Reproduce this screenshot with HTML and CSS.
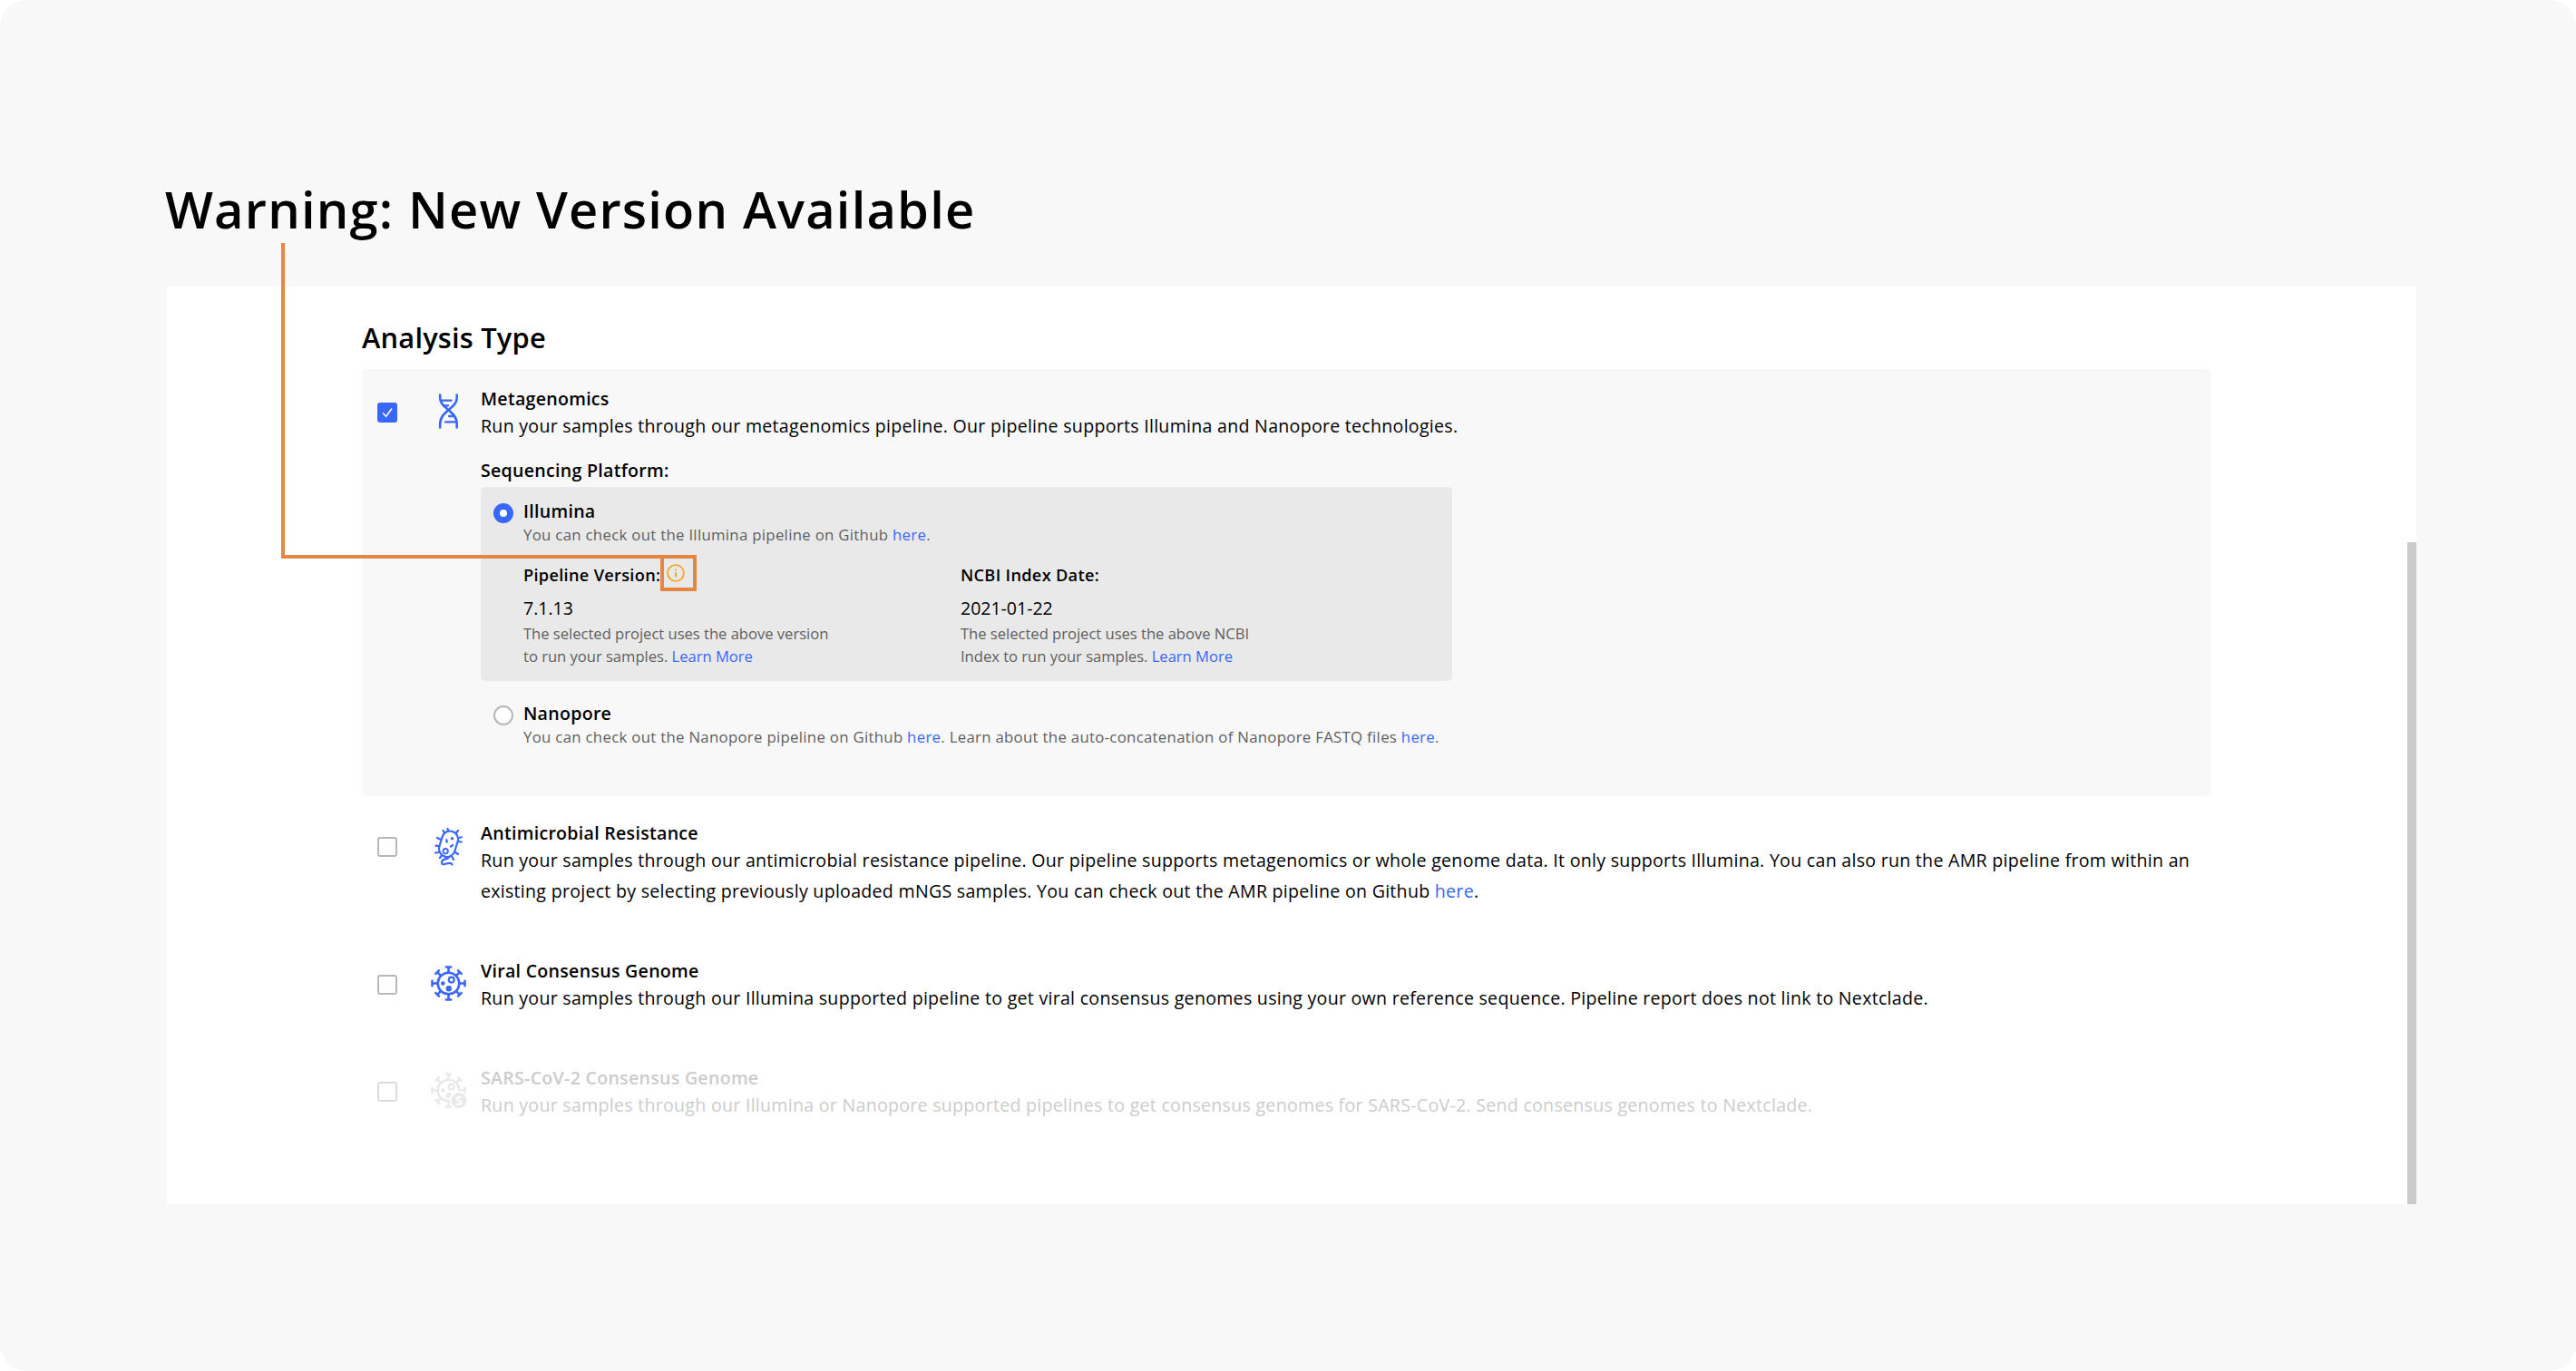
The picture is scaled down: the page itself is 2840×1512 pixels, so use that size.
FILE: index.html
```html
<!DOCTYPE html>
<html lang="en">
<head>
<meta charset="utf-8">
<title>Analysis Type</title>
<link rel="stylesheet" href="styles.css">
</head>
<body>
<main class="stage">
  <h1 class="headline">Warning: New Version Available</h1>
  <section class="panel">
    <h2 class="section-title">Analysis Type</h2>

    <article class="option option-selected">
      <span class="checkbox checked"><svg viewBox="0 0 22 22"><path d="M6 11.2 9.6 15.200 16 6.600" fill="none" stroke="#fff" stroke-width="1.6"/></svg></span>
      <svg class="icon" viewBox="0 0 39 39" fill="none" stroke="#3867fa" stroke-width="2.6" stroke-linecap="round">
        <path d="M10.200 1.500V5C10.200 16.500 28.700 19 28.700 33.500V37.500M28.700 1.500V5C28.700 16.500 10.200 19 10.200 33.500V37.500"/>
        <path d="M12 7.700H22.500M14 13.300H19M20 25H25M16 31.300H27" stroke-width="2.300"/>
      </svg>
      <div class="body">
        <h3 class="name">Metagenomics</h3>
        <p class="desc">Run your samples through our metagenomics pipeline. Our pipeline supports Illumina and Nanopore technologies.</p>
        <h4 class="platform-label">Sequencing Platform:</h4>
        <div class="platform platform-selected">
          <span class="radio on"></span>
          <div class="platform-body">
            <h4 class="platform-name">Illumina</h4>
            <p class="note">You can check out the Illumina pipeline on Github <a>here</a>.</p>
            <div class="versions">
              <div class="version">
                <h5 class="version-label">Pipeline Version:
                  <span class="callout"><svg viewBox="0 0 20 20" fill="none" stroke="#f5a623" stroke-width="1.800"><circle cx="10" cy="10" r="8.900"/><path d="M10 9V14.500M10 5.500V7.400"/></svg></span>
                </h5>
                <p class="version-value">7.1.13</p>
                <p class="note tight">The selected project uses the above version<br>to run your samples. <a>Learn More</a></p>
              </div>
              <div class="version">
                <h5 class="version-label">NCBI Index Date:</h5>
                <p class="version-value">2021-01-22</p>
                <p class="note tight">The selected project uses the above NCBI<br>Index to run your samples. <a>Learn More</a></p>
              </div>
            </div>
          </div>
        </div>
        <div class="platform">
          <span class="radio"></span>
          <div class="platform-body">
            <h4 class="platform-name">Nanopore</h4>
            <p class="note">You can check out the Nanopore pipeline on Github <a>here</a>. Learn about the auto-concatenation of Nanopore FASTQ files <a>here</a>.</p>
          </div>
        </div>
      </div>
    </article>

    <article class="option">
      <span class="checkbox"></span>
      <svg class="icon" viewBox="0 0 39 39" fill="none" stroke="#3867fa" stroke-width="2.200" stroke-linecap="round">
        <rect x="10.600" y="3.300" width="17.800" height="29" rx="8.900" transform="rotate(17 19.500 17.800)"/>
        <path d="M18.500 0.800 19.200 3.500M13.500 3 15 5.500M30 2.800 28 5.500M33.800 10.300 31 11M33.600 15.500 31 15.200M7 11 10 12.500M5.500 19.700 8.500 20.200M5 27.500 8.500 27M30 29 27 27M25 35 23.300 32M10 33 11.500 31"/>
        <path d="M19.500 33C16 35.500 12.800 34 12 37.500C12 43 17.500 38.700 20.500 38.800C22.300 38.800 23 39.300 23.500 40.500"/>
        <circle cx="16.200" cy="25.700" r="2.700" stroke-width="1.800"/>
        <circle cx="23.500" cy="11.800" r="1.700" fill="#3867fa" stroke="none"/>
        <path d="M17.200 13.300 17.700 15.500M22 20.500 24 19.200" stroke-width="2.400"/>
      </svg>
      <div class="body">
        <h3 class="name">Antimicrobial Resistance</h3>
        <p class="desc">Run your samples through our antimicrobial resistance pipeline. Our pipeline supports metagenomics or whole genome data. It only supports Illumina. You can also run the AMR pipeline from within an<br>existing project by selecting previously uploaded mNGS samples. You can check out the AMR pipeline on Github <a>here</a>.</p>
      </div>
    </article>

    <article class="option">
      <span class="checkbox"></span>
      <svg class="icon" viewBox="0 0 39 39" fill="none" stroke="#3867fa" color="#3867fa" stroke-width="2.600" stroke-linecap="round">
        <g id="virus">
          <circle cx="19.500" cy="19.500" r="11.800"/>
          <path d="M19.500 7V1.500M16.800 1.500H22.200M19.500 32V37.500M16.800 37.500H22.200M7 19.500H1.500M1.500 16.800V22.200M32 19.500H37.500M37.500 16.800V22.200"/>
          <path transform="rotate(45 19.500 19.500)" d="M19.500 7V2M17 2H22M19.500 32V37M17 37H22M7 19.500H2M2 17V22M32 19.500H37M37 17V22"/>
          <circle cx="22.700" cy="15.600" r="3" stroke-width="2.200"/>
          <circle cx="13.300" cy="19.500" r="2.300" fill="currentColor" stroke="none"/>
          <circle cx="19.800" cy="25.200" r="3.200" fill="currentColor" stroke="none"/>
        </g>
      </svg>
      <div class="body">
        <h3 class="name">Viral Consensus Genome</h3>
        <p class="desc">Run your samples through our Illumina supported pipeline to get viral consensus genomes using your own reference sequence. Pipeline report does not link to Nextclade.</p>
      </div>
    </article>

    <article class="option option-disabled">
      <span class="checkbox"></span>
      <svg class="icon" viewBox="0 0 39 39" fill="none" stroke="#e9e9e9" color="#e9e9e9" stroke-width="2.600" stroke-linecap="round">
        <use href="#virus"/>
        <circle cx="30.800" cy="30.500" r="9.500" fill="#e9e9e9" stroke="#fff" stroke-width="1.800"/>
        <text class="badge-letter" x="30.800" y="35.500">S</text>
      </svg>
      <div class="body">
        <h3 class="name">SARS-CoV-2 Consensus Genome</h3>
        <p class="desc">Run your samples through our Illumina or Nanopore supported pipelines to get consensus genomes for SARS-CoV-2. Send consensus genomes to Nextclade.</p>
      </div>
    </article>
    <div class="scroll-thumb"></div>
  </section>
  <div class="leader"></div>
</main>
</body>
</html>
```
FILE: styles.css
```css
* { box-sizing: border-box; }
body { margin: 0; background: #fff; color: #000; font-family: "Open Sans", sans-serif; }
h1, h2, h3, h4, h5, p { margin: 0; font-weight: 400; white-space: nowrap; }
a { color: #3867fa; }

.stage { position: relative; width: 2840px; height: 1512px; padding: 192px 176px 0 184px; background: #f8f8f8; border-radius: 30px; overflow: hidden; }
.headline { margin: 0 0 48px -2px; font-size: 56px; line-height: 76px; font-weight: 600; letter-spacing: 1.180px; }

.panel { position: relative; height: 1012px; padding: 35px 226px 0 215px; background: #fff; }
.section-title { margin-bottom: 13.500px; font-size: 30.800px; line-height: 42px; font-weight: 600; letter-spacing: 0.200px; }
.scroll-thumb { position: absolute; right: 0; bottom: 0; width: 10.500px; height: 730.500px; background: #cbcbcb; }

.option { display: flex; align-items: flex-start; padding: 0 0 56.400px 17px; }
.option-selected { height: 471.500px; margin-bottom: 26px; padding-top: 18.500px; padding-bottom: 0; background: #f8f8f8; border-radius: 5px; }
.checkbox { flex: none; width: 22px; height: 22px; margin-top: 19px; border: 2px solid #b8b8b8; border-radius: 3px; background: #fff; }
.checked { margin-top: 18.500px; border: 0; background: #3867fa; }
.checked svg { display: block; width: 22px; height: 22px; }
.icon { flex: none; width: 39px; height: 39px; margin: 9px 16px 0 37px; overflow: visible; }
.name, .platform-label { font-size: 19.600px; line-height: 29.400px; font-weight: 600; letter-spacing: 0.270px; }
.name { margin-bottom: -1.400px; }
.desc { font-size: 19.600px; line-height: 33.600px; letter-spacing: 0.268px; }

.platform-label { margin: 17.800px 0 3px; }
.platform { display: flex; align-items: flex-start; width: 1070.500px; padding: 13.500px 14px; border-radius: 5px; }
.platform-selected { height: 214px; margin-bottom: 9px; background: #e9e9e9; }
.radio { flex: none; width: 22px; height: 22px; margin: 5px 11px 0 0; border: 2px solid #b8b8b8; border-radius: 50%; background: #fff; }
.radio.on { border: 7px solid #3867fa; }
.platform-name { margin-bottom: -0.700px; font-size: 19.600px; line-height: 27.200px; font-weight: 600; letter-spacing: 0.270px; }
.note { font-size: 16.800px; line-height: 25.200px; letter-spacing: 0.295px; color: #5f5f5f; }
.tight { margin-top: 2.300px; font-size: 16.600px; letter-spacing: -0.020px; }
.versions { display: flex; margin-top: 16.500px; }
.version { width: 482px; }
.version-label { display: flex; margin-bottom: -2.400px; font-size: 18.200px; line-height: 30.400px; font-weight: 600; letter-spacing: 0.300px; }
.version-value { margin: 9px 0 -1px; font-size: 19.500px; line-height: 29px; }

.callout { display: flex; flex: none; align-items: center; justify-content: center; width: 40px; height: 40px; margin: -7px 0 -5px -0.300px; border: 4px solid #e58740; }
.callout svg { width: 20px; height: 20px; margin-right: 5px; }
.leader { position: absolute; left: 310px; top: 268px; width: 420px; height: 348px; border: solid #e58740; border-width: 0 0 4px 4px; }

.option-disabled .name, .option-disabled .desc { color: #ccc; }
.option-disabled .checkbox { border-color: #dcdcdc; }
.badge-letter { font: 700 14px "Open Sans", sans-serif; fill: #fff; stroke: none; text-anchor: middle; }
```
